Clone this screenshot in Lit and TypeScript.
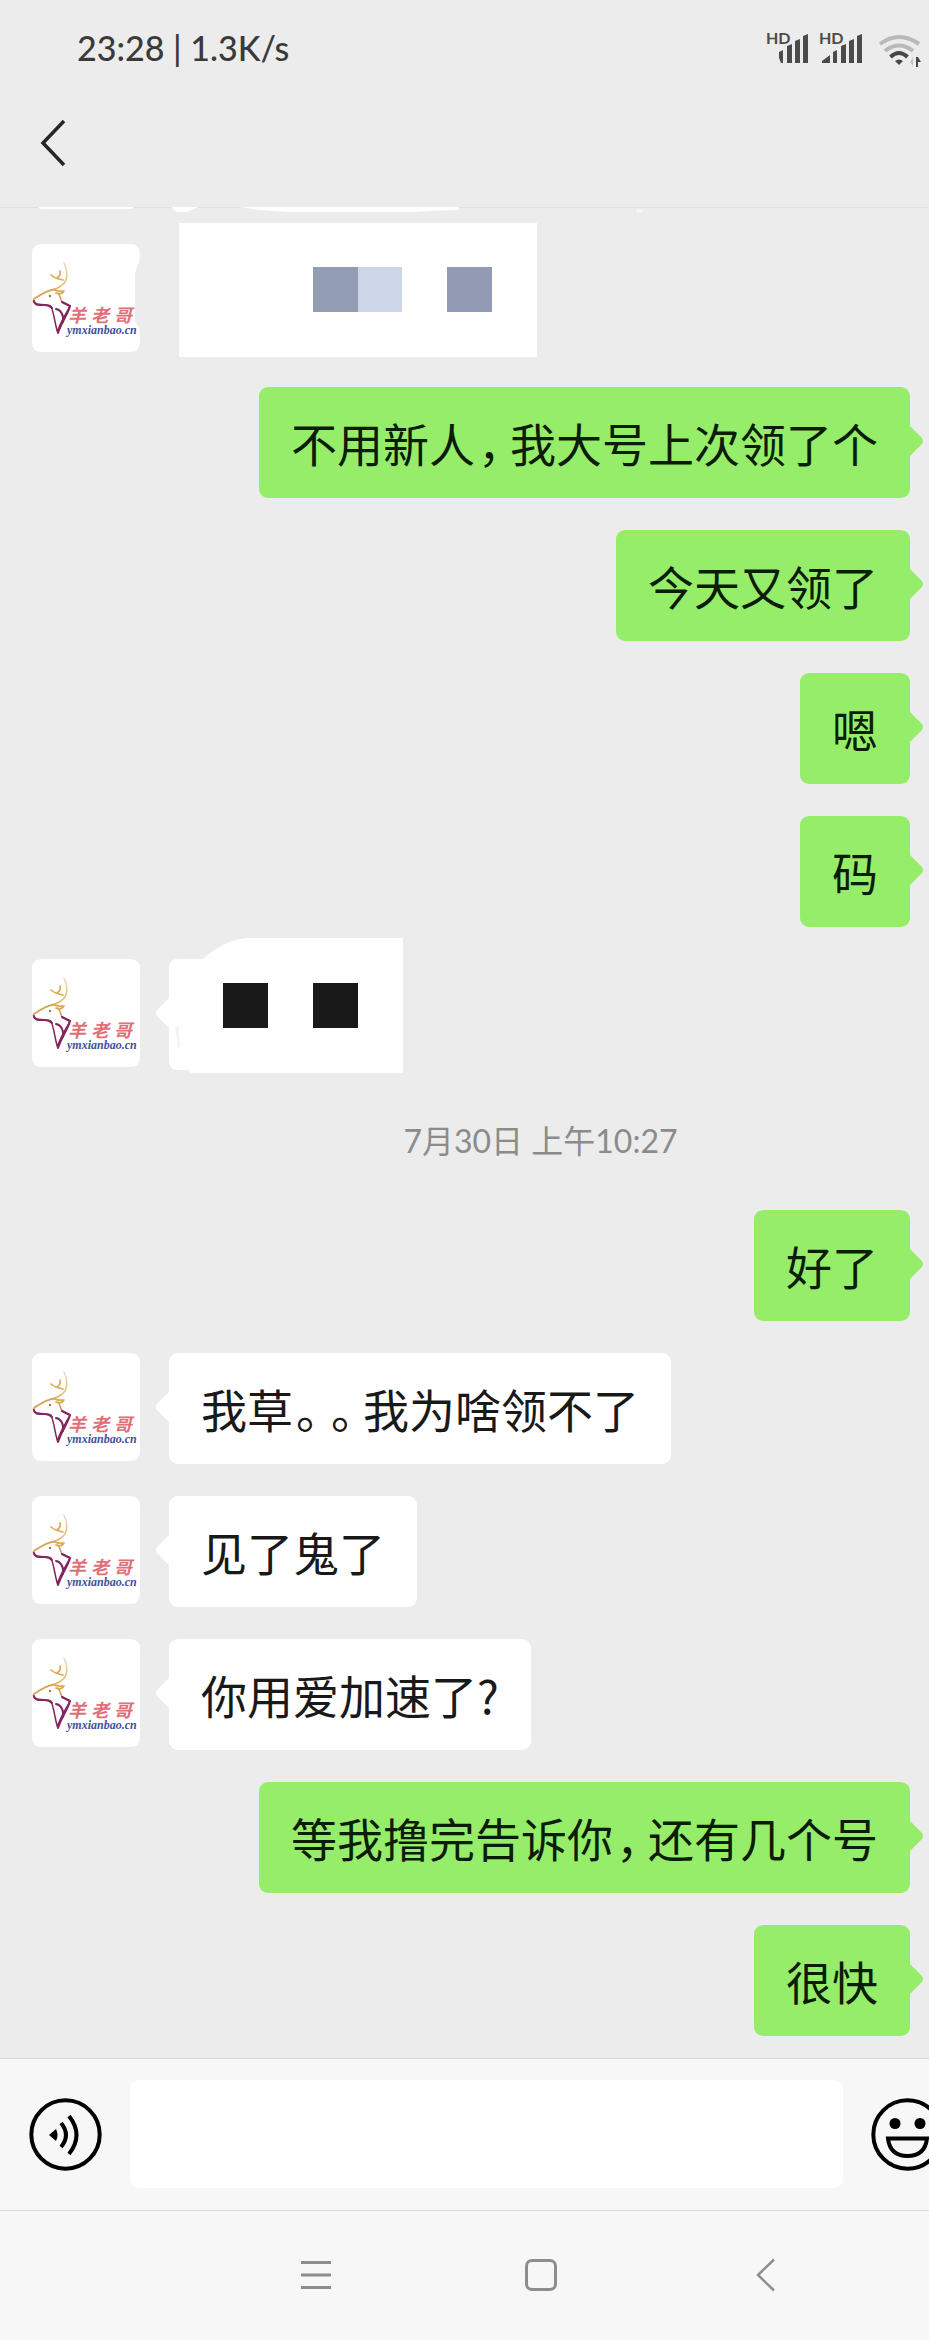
import { LitElement, html, svg, css, nothing } from "lit";
import { customElement, property } from "lit/decorators.js";

type Entry =
  | { kind: "text"; from: "me" | "them"; text: string }
  | { kind: "mosaic"; variant: "link" | "short" }
  | { kind: "time"; text: string };

const entries: Entry[] = [
  { kind: "mosaic", variant: "link" },
  { kind: "text", from: "me", text: "不用新人，我大号上次领了个" },
  { kind: "text", from: "me", text: "今天又领了" },
  { kind: "text", from: "me", text: "嗯" },
  { kind: "text", from: "me", text: "码" },
  { kind: "mosaic", variant: "short" },
  { kind: "time", text: "7月30日 上午10:27" },
  { kind: "text", from: "me", text: "好了" },
  { kind: "text", from: "them", text: "我草。。我为啥领不了" },
  { kind: "text", from: "them", text: "见了鬼了" },
  { kind: "text", from: "them", text: "你用爱加速了?" },
  { kind: "text", from: "me", text: "等我撸完告诉你，还有几个号" },
  { kind: "text", from: "me", text: "很快" },
];

@customElement("chat-avatar")
export class ChatAvatar extends LitElement {
  @property({ type: Boolean }) notched = false;

  static styles = css`
    :host { display: block; flex: none; }
    .avatar { display: block; width: 108px; height: 108px; }
    .name { font: italic 700 18px "Noto Sans CJK SC", sans-serif; fill: #df7079; }
    .site { font: italic 700 12px "Liberation Serif", serif; fill: #4350a0; }
  `;

  render() {
    return html`
      <svg class="avatar" viewBox="0 0 108 108" role="img" aria-label="羊老哥">
        <defs>
          <linearGradient id="coat" x1="0" y1="0" x2="0" y2="1">
            <stop offset="0" stop-color="#eed6c4" />
            <stop offset="0.35" stop-color="#e3b45c" />
            <stop offset="0.58" stop-color="#c98a5c" />
            <stop offset="0.68" stop-color="#8a2560" />
            <stop offset="1" stop-color="#7c1f55" />
          </linearGradient>
        </defs>
        <path fill="#fff" d=${this.notched
          ? "M10 0H98Q108 0 108 12Q108 17 105 23Q103 27 103 34V78Q108 82 108 90V98Q108 108 98 108H10Q0 108 0 98V10Q0 0 10 0Z"
          : "M10 0H98Q108 0 108 10V98Q108 108 98 108H10Q0 108 0 98V10Q0 0 10 0Z"} />
        <g fill="none" stroke-linecap="round" stroke-linejoin="round">
          <path stroke="url(#coat)" stroke-width="1.5" d="M32 19C36 27 36 37 30 41C28 43 25 44 22 46C15 46 8 51 2 55C0 57 3 60 5 61C10 62 15 60 19 62C22 69 23 80 25.500 88C28 78 34 70 38 62L30 58C28 54 28 51 26 49" />
          <path stroke="#dda953" stroke-width="1.700" d="M19 31C22 34 26 35 31 36M28 27C29 30 28 32 25 34M23 46C26 48 29 47 32 47C30 50 28 51 24 49" />
          <path stroke="#d8a45a" stroke-width="1.500" d="M23 45C15 46 8 51 2 55" />
          <path stroke="#842460" stroke-width="2" d="M2 57C2 61 8 61 13 61C17 61 18 62 20 64M30 58L38 62C36 70 29 79 26 89M24 65C29 66 32 71 31 78" />
        </g>
        <circle cx="18" cy="52" r="1.2" fill="#99785d" />
        <text class="name" x="36 59 82" y="78">羊老哥</text>
        <text class="site" x="35" y="90">ymxianbao.cn</text>
      </svg>
    `;
  }
}

@customElement("chat-row")
export class ChatRow extends LitElement {
  @property({ attribute: false }) entry!: Entry;

  static styles = css`
    :host { display: block; }
    .row { display: flex; align-items: flex-start; gap: 29px; padding: 0 19px 0 32px; }
    .row.me { justify-content: flex-end; }
    .bubble {
      position: relative;
      padding: 22px 32px;
      border-radius: 9px;
      background: #fff;
      color: #191919;
      font-size: 46px;
      line-height: 67px;
      text-spacing-trim: space-all;
    }
    .me .bubble { background: #95ed6a; color: #0b1c07; }
    .tail { position: absolute; top: 38px; left: -14px; width: 15px; height: 32px; fill: #fff; }
    .me .tail { left: auto; right: -14px; fill: #95ed6a; }
    .stop { padding: 0 9px 0 3px; font-feature-settings: "halt"; }
    .time {
      padding: 15px 0 13px 152px;
      text-align: center;
      font-family: Lato, "Noto Sans CJK SC", sans-serif;
      font-size: 32px;
      line-height: 48px;
      color: #8b8b8b;
    }
    .mosaic { display: block; width: 368px; height: 111px; overflow: visible; }
  `;

  private words(text: string) {
    return text.split(/([，。])/).map((part) =>
      /[，。]/.test(part) ? html`<span class="stop">${part}</span>` : part
    );
  }

  private mosaic(variant: "link" | "short") {
    return html`
      <svg class="mosaic" viewBox="0 0 368 111" aria-hidden="true">
        ${variant === "link"
          ? svg`
              <rect x="10" y="-21" width="358" height="134" fill="#fff" />
              <rect x="144" y="23" width="45" height="45" fill="#929db4" />
              <rect x="189" y="23" width="44" height="45" fill="#cdd6e9" />
              <rect x="278" y="23" width="45" height="45" fill="#929bb3" />`
          : svg`
              <path fill="#fff" d="M9 0H34Q56 -20 80 -21H234V114H22L19 111H9Q0 111 0 102V69L-12 57Q-14 54 -12 51L0 39V9Q0 0 9 0Z" />
              <path fill="#f4f4f4" d="M6 68H10L11 88H9Z" />
              <rect x="54" y="24" width="45" height="45" fill="#191919" />
              <rect x="144" y="24" width="45" height="45" fill="#191919" />`}
      </svg>
    `;
  }

  render() {
    const e = this.entry;
    if (e.kind === "time") return html`<div class="time">${e.text}</div>`;
    if (e.kind === "mosaic") {
      return html`<div class="row">
        <chat-avatar ?notched=${e.variant === "link"}></chat-avatar>${this.mosaic(e.variant)}
      </div>`;
    }
    const me = e.from === "me";
    return html`<div class="row ${e.from}">
      ${me ? nothing : html`<chat-avatar></chat-avatar>`}
      <div class="bubble">
        <svg class="tail" viewBox="0 0 15 32" aria-hidden="true">
          <path d=${me ? "M0 0L13 13Q15 16 13 19L0 32Z" : "M15 0L2 13Q0 16 2 19L15 32Z"} />
        </svg>${this.words(e.text)}</div>
    </div>`;
  }
}

@customElement("app-root")
export class AppRoot extends LitElement {
  static styles = css`
    :host {
      display: flex;
      flex-direction: column;
      min-height: 100vh;
      overflow: hidden;
      background: #ececec;
      font-family: "Noto Sans CJK SC", sans-serif;
    }
    button { display: block; padding: 0; border: 0; background: none; color: inherit; flex: none; }
    svg { display: block; }
    .status {
      display: flex;
      justify-content: space-between;
      align-items: center;
      padding: 26px 8px 0 77px;
      font-family: Lato, "Noto Sans", sans-serif;
      font-size: 34px;
      font-weight: 500;
      line-height: 44px;
      color: #3a3a3a;
    }
    .signals { width: 156px; height: 40px; }
    .hd { font: 700 16px Lato, "Noto Sans", sans-serif; fill: #4b4b4b; }
    .header { padding: 47px 37px 38px; border-bottom: 1px solid #e1e1e1; }
    .back { color: #262626; }
    .remains { width: 700px; height: 8px; margin-top: -1px; }
    .chat { flex: 1; display: flex; flex-direction: column; gap: 32px; padding: 29px 0 21px; }
    .composer {
      display: flex;
      align-items: center;
      gap: 28px;
      padding: 21px 0 22px 29px;
      border-top: 1px solid #d6d6d6;
      background: #f7f7f7;
    }
    .field {
      flex: 1;
      min-width: 0;
      height: 108px;
      box-sizing: border-box;
      padding: 0 24px;
      border: 0;
      border-radius: 9px;
      background: #fff;
      font: 46px "Noto Sans CJK SC", sans-serif;
      outline: none;
    }
    .emoji { margin-right: -15px; }
    .nav {
      display: flex;
      justify-content: center;
      gap: 189px;
      padding: 46px 0 47px 153px;
      border-top: 1px solid #dadada;
      background: #f7f7f7;
      color: #8e8e8e;
    }
  `;

  render() {
    return html`
      <div class="status">
        <span>23:28 | 1.3K/s</span>
        <svg class="signals" viewBox="764 28 156 40" aria-label="HD HD Wi-Fi" role="img">
          <text class="hd" x="765" y="44">HD</text>
          <text class="hd" x="818" y="44">HD</text>
          <path fill="#4b4b4b" d="M778 52L782 50V63H780L778 58ZM786 46L791 44V63H786ZM794 41L799 39V63H794ZM802 36L807 34V63H802Z" />
          <path fill="#4b4b4b" d="M821 61L829 55V63H821ZM832 52L836 50V63H832ZM840 46L845 44V63H840ZM848 41L853 39V63H848ZM856 36L861 34V63H856Z" />
          <g fill="none" stroke-width="4">
            <path stroke="#b9b9b9" d="M879 44Q898 30 918 44M884 51Q898 40 912 51" />
            <path stroke="#484848" d="M889.500 57Q898 49 906.500 57" />
          </g>
          <path fill="#484848" d="M894 61Q898 58 902 61L898 65ZM915 57H917L920 62H917V67H915Z" />
          <path fill="#c4c4c4" d="M912 57V66L909 62Z" />
        </svg>
      </div>
      <header class="header">
        <button class="back" aria-label="返回">
          <svg width="32" height="52" viewBox="0 0 32 52">
            <path fill="none" stroke="currentColor" stroke-width="3.5" d="M27 4L6 26L27 48" />
          </svg>
        </button>
      </header>
      <svg class="remains" viewBox="0 0 700 8" aria-hidden="true">
        <path fill="#fff" d="M38 0H133V1Q132 2 130 2H42Q39 2 38 0ZM172 0H198Q192 3 187 5H177Q173 3 172 0ZM240 0H459V2Q459 3 455 3L410 5H290Q262 4 240 0Z" />
        <path fill="#f5f5f5" d="M637 2H643L641 6H636Z" />
      </svg>
      <main class="chat">${entries.map((e) => html`<chat-row .entry=${e}></chat-row>`)}</main>
      <div class="composer">
        <button aria-label="语音">
          <svg width="73" height="73" viewBox="0 0 73 73" fill="none" stroke="#000" stroke-width="4">
            <circle cx="36.500" cy="36.500" r="34.2" />
            <path fill="#000" stroke="none" d="M20 37L27 31Q30 37 27 43Z" />
            <path d="M32 25Q42 37 32 49M40 18Q55 37 40 56" />
          </svg>
        </button>
        <input class="field" type="text" aria-label="消息" />
        <button class="emoji" aria-label="表情">
          <svg width="73" height="73" viewBox="0 0 73 73" fill="none" stroke="#000" stroke-width="4">
            <circle cx="36.500" cy="36.500" r="34.200" />
            <circle cx="24" cy="25.500" r="5.500" fill="#000" stroke="none" />
            <circle cx="49" cy="25.500" r="5.500" fill="#000" stroke="none" />
            <path d="M17 40.500H56Q54 58 36.500 58Q19 58 17 40.500Z" />
          </svg>
        </button>
      </div>
      <nav class="nav">
        <button aria-label="最近任务">
          <svg width="36" height="36" viewBox="0 0 36 36" stroke="currentColor" stroke-width="3">
            <path d="M3 5.500H33M3 18H33M3 30.500H33" />
          </svg>
        </button>
        <button aria-label="主屏幕">
          <svg width="36" height="36" viewBox="0 0 36 36" fill="none" stroke="currentColor" stroke-width="3">
            <rect x="3.500" y="3.500" width="29" height="29" rx="5.500" />
          </svg>
        </button>
        <button aria-label="返回上一页">
          <svg width="36" height="36" viewBox="0 0 36 36" fill="none" stroke="currentColor" stroke-width="2.500">
            <path d="M26 2.500L10 18L26 33.500" />
          </svg>
        </button>
      </nav>
    `;
  }
}
